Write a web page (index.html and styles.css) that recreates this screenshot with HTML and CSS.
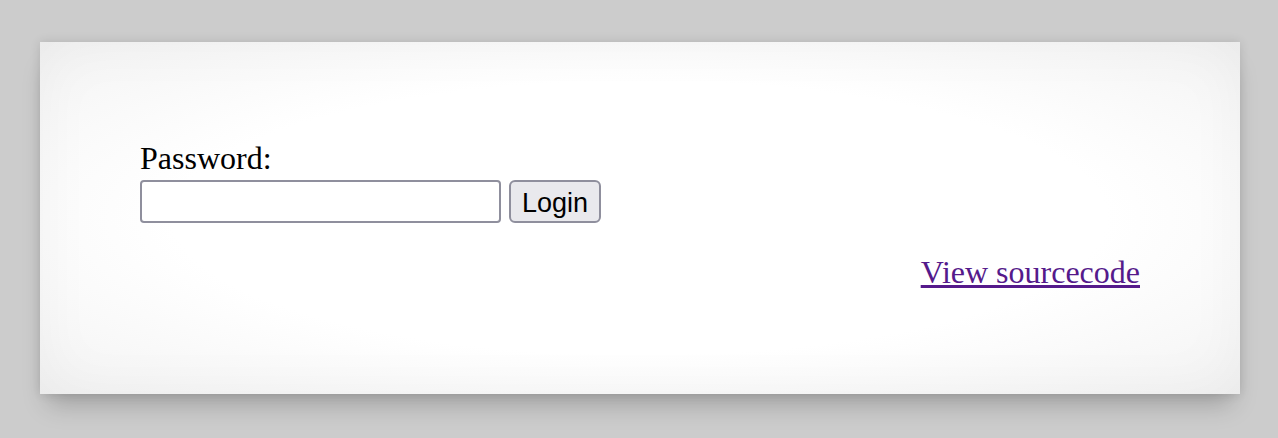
FILE: index.html
```html
<!DOCTYPE html>
<html>
<head>
<meta charset="utf-8">
<title>Login</title>
<link rel="stylesheet" href="styles.css">
</head>
<body>
<div class="content">
  <form class="login-form">
    <div class="label">Password:</div>
    <div class="row">
      <input class="field" type="password" name="password">
      <button class="btn" type="button">Login</button>
    </div>
  </form>
  <div class="source"><a class="source-link" href="#">View sourcecode</a></div>
</div>
</body>
</html>
```
FILE: styles.css
```css
html, body {
  margin: 0;
  padding: 0;
}
body {
  background: #cccccc;
  font-family: "Liberation Serif", "Times New Roman", serif;
  font-size: 32px;
  color: #000;
  padding-top: 42px;
  padding-left: 40px;
  height: 438px;
  box-sizing: border-box;
}
.content {
  width: 1200px;
  height: 352px;
  box-sizing: border-box;
  padding: 98px 100px 0 100px;
  background: radial-gradient(ellipse at center, #ffffff 55%, #f3f3f3 100%);
  box-shadow:
    0 0 10px rgba(0, 0, 0, 0.12),
    0 18px 24px -8px rgba(0, 0, 0, 0.22),
    inset 0 0 60px rgba(0, 0, 0, 0.045);
}
.login-form {
  margin: 0;
}
.label {
  line-height: 36px;
  height: 36px;
}
.row {
  display: flex;
  gap: 8px;
  margin-top: 4px;
  height: 43px;
}
.field {
  width: 361px;
  height: 43px;
  box-sizing: border-box;
  border: 2px solid #8f8f9d;
  border-radius: 4px;
  background: #fff;
  margin: 0;
  padding: 0 6px;
  outline: none;
}
.btn {
  width: 92px;
  height: 43px;
  box-sizing: border-box;
  border: 2px solid #8f8f9d;
  border-radius: 6px;
  background: #e9e9ed;
  color: #000;
  font-family: "Liberation Sans", Arial, Helvetica, sans-serif;
  font-size: 27px;
  margin: 0;
  padding: 3px 11px 0 11px;
  line-height: 1;
}
.source {
  text-align: right;
  margin-top: 31px;
  line-height: 36px;
}
.source-link {
  color: #551a8b;
  text-decoration: underline;
}
```
